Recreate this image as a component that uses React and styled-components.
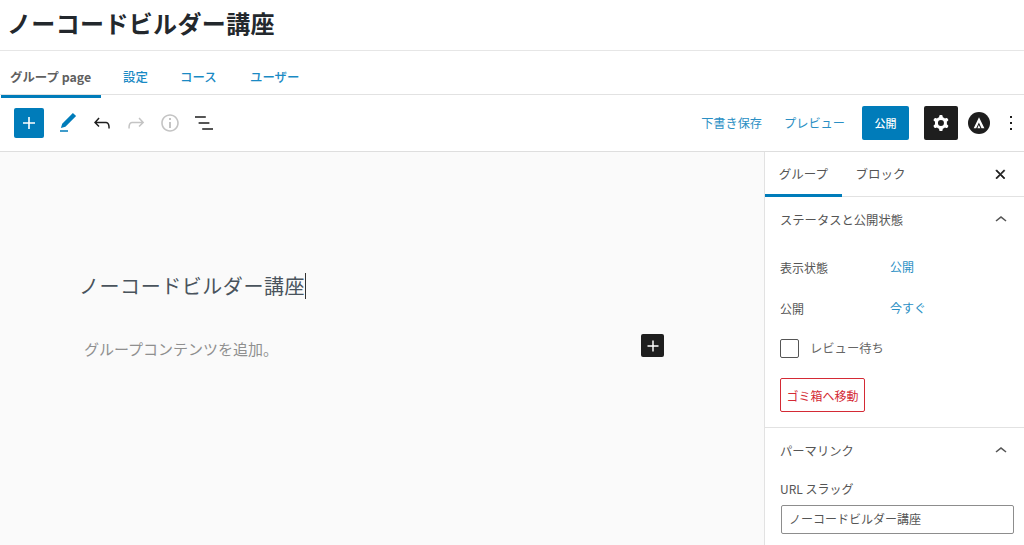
import styled, { createGlobalStyle } from "styled-components";

const FONT = `"Noto Sans CJK JP", "Noto Sans", sans-serif`;
const BLUE = "#007cba";

const GlobalStyle = createGlobalStyle`
  html, body {
    margin: 0;
    padding: 0;
    background: #fff;
    overflow: hidden;
  }
  * {
    box-sizing: border-box;
  }
`;

const Page = styled.div`
  width: 1024px;
  height: 545px;
  display: flex;
  flex-direction: column;
  overflow: hidden;
  font-family: ${FONT};
  color: #444;
`;

const TitleBar = styled.div`
  height: 51px;
  flex: none;
  display: flex;
  align-items: center;
  padding: 0 0 3px 7px;
  border-bottom: 1px solid #e6e6e6;
`;

const PageTitle = styled.h1`
  margin: 0;
  font-size: 24px;
  line-height: 1.2;
  font-weight: 700;
  color: #23282d;
  letter-spacing: 0.35px;
`;

const TabBar = styled.div`
  height: 44px;
  flex: none;
  display: flex;
  padding-left: 1px;
  border-bottom: 1px solid #e2e2e2;
`;

const TopTab = styled.div`
  height: 47px;
  width: ${(p) => p.$width}px;
  flex: none;
  padding: 17px 0 0 ${(p) => p.$pad}px;
  font-size: 12.4px;
  line-height: 18px;
  font-weight: ${(p) => (p.$active ? 700 : 500)};
  color: ${(p) => (p.$active ? "#5f5f5f" : "#1a8ac4")};
  border-bottom: ${(p) => (p.$active ? `3px solid ${BLUE}` : "none")};
`;

const Toolbar = styled.div`
  height: 57px;
  flex: none;
  display: flex;
  align-items: center;
  justify-content: space-between;
  padding: 0 0 0 14px;
  border-bottom: 1px solid #dedede;
`;

const ToolGroup = styled.div`
  display: flex;
  align-items: center;
`;

const IconSlot = styled.span`
  width: ${(p) => p.$width || 34}px;
  height: 30px;
  margin-left: ${(p) => p.$gap || 0}px;
  display: flex;
  align-items: center;
  justify-content: center;
  flex: none;
  color: ${(p) => p.$color || "#1e1e1e"};
`;

const AddButton = styled.div`
  width: 30px;
  height: 30px;
  display: flex;
  align-items: center;
  justify-content: center;
  flex: none;
  margin-right: 7px;
  background: ${BLUE};
  border-radius: 2px;
  color: #fff;
`;

const LinkAction = styled.span`
  font-size: 12.2px;
  line-height: 18px;
  color: #2a8fc4;
  margin-right: ${(p) => p.$gap}px;
  white-space: nowrap;
`;

const PublishButton = styled.div`
  width: 47px;
  height: 34px;
  display: flex;
  align-items: center;
  justify-content: center;
  font-size: 11px;
  font-weight: 500;
  color: #fff;
  background: ${BLUE};
  border-radius: 2px;
  margin-right: 15px;
`;

const SettingsButton = styled.div`
  width: 34px;
  height: 34px;
  display: flex;
  align-items: center;
  justify-content: center;
  background: #1e1e1e;
  border-radius: 2px;
  color: #fff;
  margin-right: 10px;
`;

const Main = styled.div`
  flex: 1;
  min-height: 0;
  display: flex;
`;

const Canvas = styled.div`
  flex: 1;
  min-width: 0;
  background: #fafafa;
  padding: 119px 100px 0 79px;
`;

const GroupTitle = styled.div`
  display: flex;
  align-items: center;
  height: 30px;
  font-size: 20px;
  line-height: 30px;
  color: #49535c;
  letter-spacing: 0.55px;
`;

const Caret = styled.span`
  width: 1px;
  height: 26px;
  background: #333;
`;

const Placeholder = styled.div`
  display: flex;
  align-items: center;
  justify-content: space-between;
  margin-top: 35px;
  padding-left: 5px;
  height: 24px;
  font-size: 15px;
  color: #8f8f8f;
`;

const InlineAdd = styled.div`
  width: 23px;
  height: 23px;
  display: flex;
  align-items: center;
  justify-content: center;
  margin-top: -5px;
  background: #1e1e1e;
  border-radius: 2px;
  color: #fff;
`;

const Sidebar = styled.aside`
  width: 260px;
  flex: none;
  background: #fff;
  border-left: 1px solid #e2e2e2;
`;

const SideTabs = styled.div`
  height: 45px;
  display: flex;
  align-items: flex-start;
  border-bottom: 1px solid #e2e2e2;
`;

const SideTab = styled.div`
  width: ${(p) => p.$width}px;
  height: 45px;
  flex: none;
  padding-top: 12px;
  text-align: center;
  font-size: 12.5px;
  line-height: 19px;
  color: #555;
  border-bottom: ${(p) => (p.$active ? `3px solid ${BLUE}` : "none")};
`;

const CloseSlot = styled.span`
  margin-left: auto;
  width: 47px;
  height: 44px;
  display: flex;
  align-items: center;
  justify-content: center;
  color: #1e1e1e;
`;

const Panel = styled.section`
  padding: 0 11px 0 15px;
  border-bottom: ${(p) => (p.$last ? "none" : "1px solid #e2e2e2")};
`;

const PanelHead = styled.div`
  height: 46px;
  display: flex;
  align-items: center;
  justify-content: space-between;
  font-size: 12.3px;
  color: #555;
`;

const Rows = styled.div`
  padding-top: 4px;
`;

const Row = styled.div`
  display: flex;
  align-items: center;
  height: ${(p) => p.$height}px;
  font-size: 12px;
  color: #555;
`;

const RowLabel = styled.span`
  width: 110px;
  flex: none;
`;

const RowValue = styled.span`
  color: #2a8fc4;
  margin-top: -2px;
`;

const CheckRow = styled.label`
  display: flex;
  align-items: center;
  gap: 11px;
  height: 20px;
  margin-top: 9px;
  font-size: 12.3px;
  color: #666;
`;

const CheckBox = styled.span`
  width: 19px;
  height: 19px;
  border: 1px solid #555;
  border-radius: 2px;
  background: #fff;
`;

const TrashButton = styled.div`
  width: 85px;
  height: 34px;
  margin: 20px 0 15px;
  display: flex;
  align-items: center;
  justify-content: center;
  font-size: 12px;
  color: #d42a35;
  border: 1px solid #d42a35;
  border-radius: 2px;
`;

const FieldLabel = styled.div`
  font-size: 12px;
  line-height: 18px;
  margin-top: 6px;
  color: #555;
`;

const SlugInput = styled.div`
  width: 233px;
  height: 29px;
  margin: 7px 0 0 1px;
  padding: 0 0 2px 7px;
  display: flex;
  align-items: center;
  font-size: 12px;
  color: #555;
  border: 1px solid #8d8d8d;
  border-radius: 2px;
`;

const Icon = ({ d, size = 24, evenOdd, bold }) => (
  <svg width={size} height={size} viewBox="0 0 24 24" fill="currentColor" stroke={bold ? "currentColor" : "none"} strokeWidth={bold ? 1 : 0}>
    <path d={d} fillRule={evenOdd ? "evenodd" : undefined} clipRule={evenOdd ? "evenodd" : undefined} />
  </svg>
);

const PLUS = "M18 11.2h-5.2V6h-1.6v5.2H6v1.6h5.2V18h1.6v-5.2H18z";
const PENCIL = "M20.1 5.1L16.9 2 6.2 12.7l-1.3 4.4 4.5-1.3L20.1 5.1zM4 20.8h8v-1.5H4v1.5z";
const UNDO = "M18.3 11.7c-.6-.6-1.4-.9-2.3-.9H6.7l2.9-3.3-1.1-1-4.5 5L8.5 16l1-1-2.7-2.7H16c.5 0 .9.2 1.3.5 1 1 1 3.4 1 4.5v.3h1.5v-.2c0-1.5 0-4.3-1.5-5.7z";
const REDO = "M15.6 6.5l-1.1 1 2.9 3.3H8c-.9 0-1.7.3-2.3.9-1.4 1.5-1.4 4.2-1.4 5.6v.2h1.5v-.3c0-1.1 0-3.5 1-4.5.3-.3.7-.5 1.3-.5h9.2L14.5 15l1.1 1.1 4.6-4.6-4.6-5z";
const INFO = "M12 3.2c-4.8 0-8.8 3.9-8.8 8.8 0 4.8 3.9 8.8 8.8 8.8 4.8 0 8.8-3.9 8.8-8.8 0-4.8-4-8.8-8.8-8.8zm0 16c-4 0-7.2-3.3-7.2-7.2C4.8 8 8 4.8 12 4.8s7.2 3.3 7.2 7.2c0 4-3.2 7.2-7.2 7.2zM11 17h2v-6h-2v6zm0-8h2V7h-2v2z";
const LIST = "M13.8 5.2H3v1.5h10.8V5.2zm-3.6 12v1.5H21v-1.5H10.2zm7.2-6H6.6v1.5h10.8v-1.5z";
const COG = "M10.289 4.836A1 1 0 0111.275 4h1.306a1 1 0 01.987.836l.244 1.466c.787.26 1.503.679 2.108 1.218l1.393-.522a1 1 0 011.216.437l.653 1.13a1 1 0 01-.23 1.273l-1.148.944a6.025 6.025 0 010 2.435l1.149.946a1 1 0 01.23 1.272l-.653 1.13a1 1 0 01-1.216.437l-1.394-.522c-.605.54-1.32.958-2.108 1.218l-.244 1.466a1 1 0 01-.987.836h-1.306a1 1 0 01-.986-.836l-.244-1.466a5.995 5.995 0 01-2.108-1.218l-1.394.522a1 1 0 01-1.217-.436l-.653-1.131a1 1 0 01.23-1.272l1.149-.946a6.026 6.026 0 010-2.435l-1.148-.944a1 1 0 01-.23-1.272l.653-1.131a1 1 0 011.217-.437l1.393.522a5.994 5.994 0 012.108-1.218l.244-1.466zM14.929 12a3 3 0 11-6 0 3 3 0 016 0z";
const CLOSE = "M13 11.8l5.2-5.2-1.2-1.2-5.2 5.2-5.2-5.2-1.2 1.2 5.2 5.2-5.2 5.2 1.2 1.2 5.2-5.2 5.2 5.2 1.2-1.2z";
const CHEVRON = "M6.5 12.4L12 8l5.5 4.4-.9 1.2L12 10l-4.5 3.6-1-1.2z";
const DOTS = "M13 19h-2v-2h2v2zm0-6h-2v-2h2v2zm0-6h-2V5h2v2z";

const AstraLogo = () => (
  <svg width="22" height="22" viewBox="0 0 22 22">
    <circle cx="11" cy="11" r="11" fill="#1e1e1e" />
    <path d="M11 5.2L5.7 16.2h2.5l2.7-5.6 2.6 5.6h2.9zM10.8 13l-1.4 3.2h3z" fill="#fff" />
  </svg>
);

const App = () => {
  return (
    <Page>
      <GlobalStyle />
      <TitleBar>
        <PageTitle>ノーコードビルダー講座</PageTitle>
      </TitleBar>
      <TabBar>
        <TopTab $active $width={100} $pad={9}>グループ page</TopTab>
        <TopTab $width={57} $pad={22}>設定</TopTab>
        <TopTab $width={70} $pad={22}>コース</TopTab>
        <TopTab $width={80} $pad={22}>ユーザー</TopTab>
      </TabBar>
      <Toolbar>
        <ToolGroup>
          <AddButton><Icon d={PLUS} /></AddButton>
          <IconSlot $color={BLUE}><Icon d={PENCIL} /></IconSlot>
          <IconSlot><Icon d={UNDO} /></IconSlot>
          <IconSlot $color="#c4c4c4"><Icon d={REDO} /></IconSlot>
          <IconSlot $color="#c4c4c4"><Icon d={INFO} /></IconSlot>
          <IconSlot><Icon d={LIST} /></IconSlot>
        </ToolGroup>
        <ToolGroup>
          <LinkAction $gap={22}>下書き保存</LinkAction>
          <LinkAction $gap={17}>プレビュー</LinkAction>
          <PublishButton>公開</PublishButton>
          <SettingsButton><Icon d={COG} evenOdd /></SettingsButton>
          <AstraLogo />
          <IconSlot $width={26} $gap={8}><Icon d={DOTS} /></IconSlot>
        </ToolGroup>
      </Toolbar>
      <Main>
        <Canvas>
          <GroupTitle>ノーコードビルダー講座<Caret /></GroupTitle>
          <Placeholder>
            グループコンテンツを追加。
            <InlineAdd><Icon d={PLUS} size={22} /></InlineAdd>
          </Placeholder>
        </Canvas>
        <Sidebar>
          <SideTabs>
            <SideTab $active $width={77}>グループ</SideTab>
            <SideTab $width={77}>ブロック</SideTab>
            <CloseSlot><Icon d={CLOSE} size={17} bold /></CloseSlot>
          </SideTabs>
          <Panel>
            <PanelHead>ステータスと公開状態<Icon d={CHEVRON} /></PanelHead>
            <Rows>
              <Row $height={40}>
                <RowLabel>表示状態</RowLabel>
                <RowValue>公開</RowValue>
              </Row>
              <Row $height={42}>
                <RowLabel>公開</RowLabel>
                <RowValue>今すぐ</RowValue>
              </Row>
            </Rows>
            <CheckRow><CheckBox />レビュー待ち</CheckRow>
            <TrashButton>ゴミ箱へ移動</TrashButton>
          </Panel>
          <Panel $last>
            <PanelHead>パーマリンク<Icon d={CHEVRON} /></PanelHead>
            <FieldLabel>URL スラッグ</FieldLabel>
            <SlugInput>ノーコードビルダー講座</SlugInput>
          </Panel>
        </Sidebar>
      </Main>
    </Page>
  );
};

export default App;
